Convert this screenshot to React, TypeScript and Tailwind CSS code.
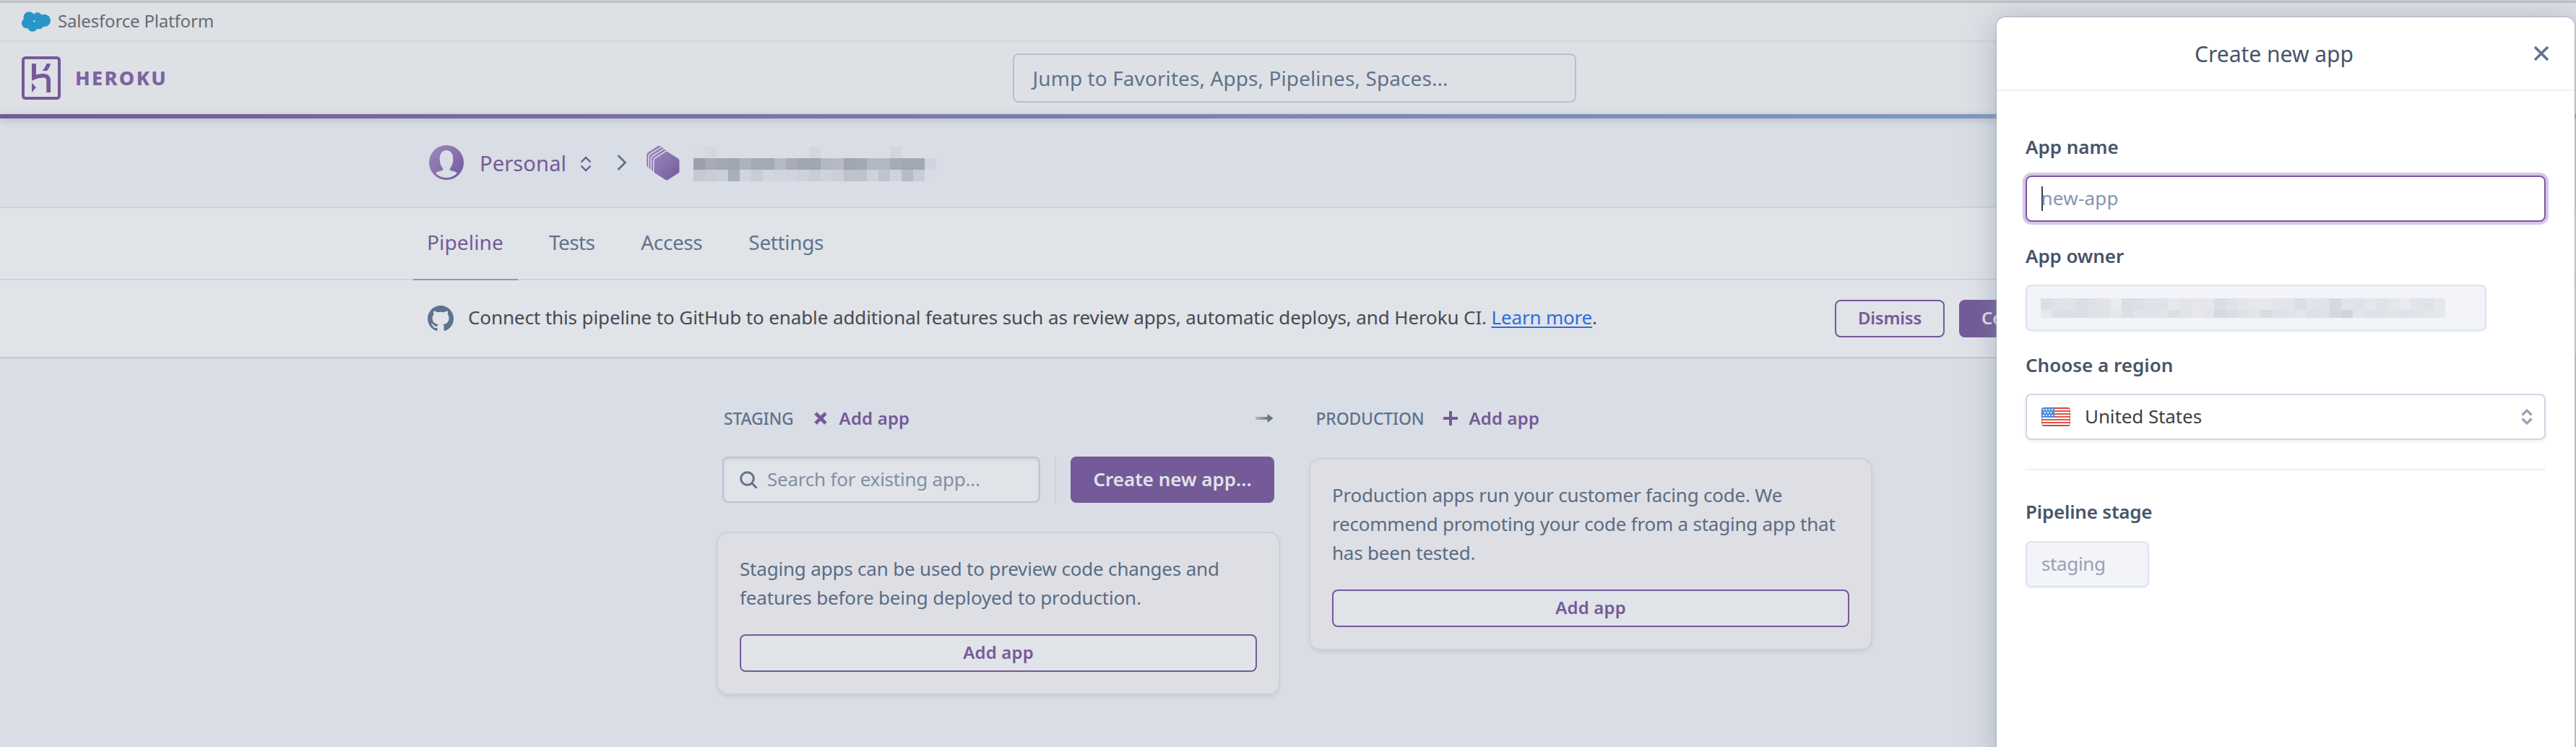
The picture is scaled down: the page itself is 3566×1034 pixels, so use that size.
import type { ReactNode } from "react";

const PURPLE = "#745a98";
const SLATE = "#5f738c";

function SalesforceCloud() {
  return (
    <svg width="40" height="28" viewBox="0 0 40 28" fill="#2b94c8">
      <circle cx="10.3" cy="8" r="7.8" />
      <circle cx="21.8" cy="7.6" r="6.4" />
      <circle cx="31.2" cy="12.4" r="8.7" />
      <circle cx="7" cy="16.3" r="7" />
      <circle cx="15" cy="20.8" r="7" />
      <circle cx="24" cy="17.8" r="6.5" />
    </svg>
  );
}

function HerokuLogo() {
  return (
    <svg width="54" height="60" viewBox="0 0 54 60" fill={PURPLE}>
      <rect x="2" y="2" width="50" height="56" rx="3.5" fill="none" stroke={PURPLE} strokeWidth="4" />
      <path d="M14 10h6v15.6c2.8-.8 6.400-1.500 10-1.500 6.700 0 10 4 10 8.900v17h-5.700V33.200c0-1.800-1-3.600-4.600-3.600-6.400 0-13.600 3.300-15.700 4.300z" />
      <path d="M14 36.500l6 6.500-6 7z" />
      <path d="M34.500 10H40c-.6 3.600-2.400 7-5 10h-6.500c3-3.300 5-6.500 6-10z" />
    </svg>
  );
}

function Avatar() {
  return (
    <svg width="48" height="48" viewBox="0 0 48 48">
      <defs>
        <linearGradient id="avatar" x1="0" y1="0" x2="1" y2="1">
          <stop offset="0" stopColor="#9d8ac0" />
          <stop offset="1" stopColor="#71589a" />
        </linearGradient>
      </defs>
      <circle cx="24" cy="24" r="24" fill="url(#avatar)" />
      <path
        fill="#d9dde5"
        d="M24 7c6 0 9.300 5 9.300 12 0 5.500-1.800 10-4.300 13-.9 1.600-.4 2.700 1.500 3.200 3.500.9 6.500 1.500 8.300 3C35.500 42.500 30 45 24 45s-11.500-2.500-14.800-6.800c1.800-1.500 4.800-2.100 8.300-3 1.900-.5 2.400-1.600 1.500-3.200-2.500-3-4.300-7.500-4.300-13C14.700 12 18 7 24 7z"
      />
    </svg>
  );
}

const HEX = "M26.500 9.200c.9-.6 1.900-.6 2.800 0l14.200 9.100c1.200.8 1.900 2 1.900 3.400v14c0 1.400-.7 2.600-1.900 3.400l-14.200 9c-.9.600-1.900.6-2.800 0l-14.200-9c-1.200-.8-1.900-2-1.900-3.400v-14c0-1.400.7-2.600 1.900-3.400z";

function PipelineHex() {
  return (
    <svg width="47" height="48" viewBox="0 0 47 48">
      <defs>
        <linearGradient id="hex" x1="0" y1="0" x2="1" y2="1">
          <stop offset="0" stopColor="#9d86bd" />
          <stop offset="1" stopColor="#71589a" />
        </linearGradient>
      </defs>
      {[3, 2, 1, 0].map((i) => (
        <g key={i} transform={`translate(${-i * 3.4} ${-i * 2.8 - 1}) `}>
          <path d={HEX} fill="#d9dde5" stroke="#d9dde5" strokeWidth="3" />
          <path d={HEX} fill="url(#hex)" />
        </g>
      ))}
      <path d="M31 0h16v16.500L31.500 7z" fill="#d9dde5" />
    </svg>
  );
}

function UpDown({ color, w = 16, sw = 2.4 }: { color: string; w?: number; sw?: number }) {
  return (
    <svg width={w} height="22" viewBox="0 0 16 22" fill="none" stroke={color} strokeWidth={sw}>
      <path d="M1.500 8.500L8 2l6.500 6.500M1.500 13.500L8 20l6.500-6.500" />
    </svg>
  );
}

function GithubMark() {
  return (
    <svg width="36" height="36" viewBox="0 0 16 16" fill={SLATE}>
      <path d="M8 0C3.580 0 0 3.580 0 8c0 3.540 2.290 6.530 5.470 7.590.4.070.55-.17.55-.38 0-.19-.01-.82-.01-1.490-2.010.37-2.530-.49-2.690-.94-.09-.23-.48-.94-.82-1.130-.28-.15-.68-.52-.01-.53.63-.01 1.080.58 1.230.82.72 1.210 1.870.87 2.330.66.070-.52.28-.87.510-1.070-1.780-.2-3.640-.89-3.640-3.950 0-.87.310-1.590.82-2.150-.08-.2-.36-1.020.08-2.120 0 0 .67-.21 2.200.82.640-.18 1.320-.27 2-.27s1.360.09 2 .27c1.530-1.040 2.200-.82 2.200-.82.440 1.100.16 1.920.08 2.120.510.56.82 1.270.82 2.150 0 3.070-1.870 3.750-3.650 3.950.29.25.540.73.540 1.480 0 1.070-.01 1.930-.01 2.200 0 .21.15.46.550.38A8.010 8.010 0 0016 8c0-4.420-3.580-8-8-8z" />
    </svg>
  );
}

function Flag() {
  return (
    <svg width="40" height="26" viewBox="0 0 40 26">
      <defs>
        <clipPath id="flagClip">
          <rect width="40" height="26" rx="3.500" />
        </clipPath>
        <linearGradient id="flagBlue" x1="0" y1="0" x2="1" y2="1">
          <stop offset="0" stopColor="#5ba3ea" />
          <stop offset="1" stopColor="#3b82de" />
        </linearGradient>
      </defs>
      <g clipPath="url(#flagClip)">
        <rect width="40" height="26" fill="#fff" />
        {[0, 1, 2, 3, 4, 5, 6].map((i) => (
          <rect key={i} y={i * 4} width="40" height="2" fill="#e25346" />
        ))}
        <rect width="18" height="14" fill="url(#flagBlue)" />
        {[2, 6, 10, 14].map((x) => (
          <g key={x} fill="#e3effc">
            <rect x={x} y="2" width="2" height="2" />
            <rect x={x} y="10" width="2" height="2" />
            {x < 14 && <rect x={x + 2} y="6" width="2" height="2" />}
          </g>
        ))}
        <rect x=".5" y=".5" width="39" height="25" rx="3.500" fill="none" stroke="#8d2f2a" strokeOpacity=".5" />
      </g>
    </svg>
  );
}

function Mosaic({ rows, heights }: { rows: string[][]; heights: number[] }) {
  return (
    <div>
      {rows.map((row, r) => (
        <div key={r} className="flex" style={{ height: heights[r] }}>
          {row.map((c, i) => (
            <div key={i} className="w-4" style={{ backgroundColor: c }} />
          ))}
        </div>
      ))}
    </div>
  );
}

const N = "transparent";
const NAME_ROWS = [
  ["#d7dbe2", "#d3d7e0", N, N, N, N, N, N, N, N, "#d2d6df", N, N, N, N, N, N, "#d2d6df", N, N, N],
  ["#9a9fab", "#a6abb6", "#a2a8b3", "#a1a7b2", "#adb3bd", "#a3a9b5", "#a3a9b5", "#b6bac5", "#a8adb8", "#a0a6b2", "#a0a6b2", "#b2b8c2", "#b6bbc6", "#a0a6b1", "#a2a8b3", "#b1b8c1", "#b1b8c2", "#a4aab6", "#a2a8b3", "#a2a8b3", "#d0d4de"],
  ["#c5cad3", "#c8ccd5", "#cbcfd9", "#a9afba", "#d0d4de", "#c8ccd5", "#d2d6df", "#d0d4de", "#d0d4de", "#cdd1da", "#c7ccd5", "#cfd3dc", "#cbcfd8", "#bdc2cb", "#bdc2cb", "#cdd1dc", "#c0c4ce", "#cfd3dd", "#b6bbc6", "#c9cdd8", "#d7dbe3"],
];
const OWNER_ROWS = [
  ["#dcdfe6", "#dfe2ea", "#e1e3e7", "#dcdee6", "#dfe1e9", "#e1e3e7", "#e8eaee", "#dcdee6", "#dcdfe7", "#dfe2ea", "#dfe2ea", "#e6e8ed", "#e2e4e8", "#e5e7eb", "#e5e7eb", "#d9dde5", "#dee1e9", "#e3e5e9", "#e6e8ec", "#e6e8ec", "#e3e5e9", "#e3e5e9", "#dbdee6", "#e1e4ec", "#e0e3eb", "#d5dae2", "#e1e4ed", "#dfe2e9", "#e4e6ea", "#dfe2e9", "#e4e6ea", "#e8eaee", "#e3e5ea", "#dfe2e9", "#e5e7eb"],
  ["#e6e8ec", "#dddfe8", "#dddfe8", "#dcdee3", "#dee1e8", "#dfe1e6", "#e6e7eb", "#dbdee6", "#e2e4e8", "#e1e3e7", "#e3e5e9", "#dbdde3", "#e1e3eb", "#e6e8ed", "#e3e5e9", "#d5dae2", "#d9dde6", "#dfe2e5", "#e3e5e9", "#d9dde3", "#dee1e7", "#dfe2ea", "#e3e5ea", "#dde0e8", "#dee1e8", "#d4d9e1", "#cfd3dc", "#e3e5e9", "#dfe2ea", "#dfe2ea", "#e1e4e9", "#dfe2ea", "#e0e3e8", "#e3e5e9", "#e6e8ec"],
];

function OutlineButton({ children, className }: { children: ReactNode; className: string }) {
  return (
    <button
      className={`flex h-[52px] items-center justify-center rounded-lg border-2 border-[#745a98] bg-[#e0e3e8] pb-[2px] text-2xl font-semibold text-[#745a98] ${className}`}
    >
      {children}
    </button>
  );
}

function StageCard({ lines, className }: { lines: { text: string; track: string }[]; className: string }) {
  return (
    <div
      className={`rounded-2xl border-2 border-[#cbd1db] bg-[#dedfe5] pt-[29px] pr-[30px] pb-[30px] pl-[30px] shadow-[0_3px_5px_rgba(95,115,140,0.13)] ${className}`}
    >
      <div className="text-[26px] leading-10 whitespace-nowrap text-[#5a6c84]">
        {lines.map((l) => (
          <div key={l.text} className={l.track}>
            {l.text}
          </div>
        ))}
      </div>
      <OutlineButton className="mt-[31px] w-full tracking-[0.17px]">Add app</OutlineButton>
    </div>
  );
}

function Label({ children, className }: { children: ReactNode; className: string }) {
  return <div className={`text-[26px] leading-9 font-semibold text-[#475569] ${className}`}>{children}</div>;
}

function CreateAppPanel() {
  return (
    <aside className="absolute top-6 left-[2764px] h-[1040px] w-[800px] rounded-t-xl bg-white shadow-[0_0_0_1.5px_rgba(150,165,185,0.4),0_4px_44px_rgba(125,140,155,0.5)]">
      <div className="flex h-[102px] items-center border-b-2 border-[#eff0f6] pr-[35px] pl-[25px]">
        <h2 className="flex-1 text-center text-[30px] text-[#475569]">Create new app</h2>
        <svg width="22" height="22" viewBox="0 0 22 22" stroke="#5f738c" strokeWidth="3.600" fill="none">
          <path d="M2 2l18 18M20 2L2 20" />
        </svg>
      </div>
      <div className="px-10 pt-[59px] whitespace-nowrap">
        <Label className="">App name</Label>
        <div className="mt-[22px] flex h-16 items-center rounded-lg border-2 border-[#79589f] pl-5 text-[26px] tracking-[0.25px] text-[#8595ad] ring-4 ring-[#d8c6eb]">
          <span className="h-[34px] w-0.5 bg-[#3c3e44]" />
          <span className="-ml-[2.5px] pb-0.5">new-app</span>
        </div>
        <Label className="mt-[29px] tracking-[-0.09px]">App owner</Label>
        <div className="mt-[22px] flex h-16 w-[638px] items-center rounded-lg border-2 border-[#dce3ee] bg-[#f3f4f9] pl-[19px] shadow-[0_2px_3px_rgba(95,115,140,0.08)]">
          <Mosaic rows={OWNER_ROWS} heights={[16, 11]} />
        </div>
        <Label className="mt-[29px]">Choose a region</Label>
        <div className="mt-[22px] flex h-16 items-center rounded-lg border-2 border-[#cfd7e6] pr-4 pl-5 shadow-[0_2px_4px_rgba(95,115,140,0.12)]">
          <Flag />
          <span className="flex-1 pb-0.5 pl-5 text-[26px] tracking-[-0.1px] text-[#3f4147]">United States</span>
          <UpDown color="#94a4bb" sw={3.2} />
        </div>
        <div className="mt-10 h-0.5 bg-[#eff0f6]" />
        <Label className="mt-[39px] tracking-[-0.2px]">Pipeline stage</Label>
        <div className="mt-[23px] flex h-16 w-[171px] items-center rounded-lg border-2 border-[#dde2ee] bg-[#f3f4f9] pb-0.5 pl-5 text-[26px] tracking-[-0.36px] text-[#96a2b5] shadow-[0_2px_3px_rgba(95,115,140,0.08)]">
          staging
        </div>
      </div>
    </aside>
  );
}

const TABS = [
  { label: "Tests", cls: "tracking-[-0.6px] ml-[43px]" },
  { label: "Access", cls: "tracking-[-0.4px] ml-[64px]" },
  { label: "Settings", cls: "tracking-[-0.34px] ml-[64px]" },
];

export default function App() {
  return (
    <div
      className="relative flex h-[1034px] w-[3566px] flex-col overflow-hidden bg-[#d9dde5]"
      style={{ fontFamily: '"Noto Sans", sans-serif' }}
    >
      <div className="h-1 shrink-0 border-b-2 border-[#bcbec1] bg-[#cbcbcc]" />

      <div className="flex h-[54px] shrink-0 items-center border-b-2 border-[#cfd5de] bg-[#dde0e5] pl-[30px]">
        <SalesforceCloud />
        <span className="pb-[3px] pl-[10px] text-2xl tracking-[-0.18px] text-[#686b71]">Salesforce Platform</span>
      </div>

      <header className="flex h-[100px] shrink-0 items-center bg-[#dde0e5] pl-[30px]">
        <HerokuLogo />
        <span className="w-[1318px] pl-5 text-[27px] font-extrabold tracking-[2.4px] text-[#7e62a2]">HEROKU</span>
        <div className="flex h-[68px] w-[780px] items-center rounded-lg border-2 border-[#b5c1d4] pb-px pl-[25.5px] text-[28px] tracking-[0.09px] text-[#5f738c]">
          Jump to Favorites, Apps, Pipelines, Spaces...
        </div>
      </header>
      <div className="relative h-1.5 shrink-0 bg-linear-to-r from-[#745a98] via-[#7c86b4] to-[#7ea9cc] shadow-[0_2px_10px_rgba(70,80,95,0.28)]" />

      <div className="flex h-[124px] shrink-0 items-center border-b-2 border-[#cbd2de] pl-[594px]">
        <Avatar />
        <span className="pt-px pl-[22px] text-[29px] tracking-[0.15px] text-[#745a98]">Personal</span>
        <div className="ml-[19px] pt-1">
          <UpDown color={PURPLE} />
        </div>
        <svg className="ml-[35px]" width="14" height="24" viewBox="0 0 14 24" fill="none" stroke={SLATE} strokeWidth="2.800">
          <path d="M1.500 2l10 10-10 10" />
        </svg>
        <div className="ml-[27px] pt-0.5">
          <PipelineHex />
        </div>
        <div className="ml-[18px] pt-1">
          <Mosaic rows={NAME_ROWS} heights={[16, 16, 16]} />
        </div>
      </div>

      <nav className="flex h-[100px] shrink-0 border-b-2 border-[#cbd2de] bg-[#e0e3e8] pl-[572px] text-[28px] text-[#5f738c]">
        <div className="-mb-0.5 flex w-[145px] items-center border-b-2 border-[#9a90b6] pb-1 pl-[19px] tracking-[0.15px] text-[#745a98]">
          Pipeline
        </div>
        {TABS.map((t) => (
          <div key={t.label} className={`flex items-center pb-1 ${t.cls}`}>
            {t.label}
          </div>
        ))}
      </nav>

      <div className="flex h-[108px] shrink-0 items-center border-b-2 border-[#c3c7cc] bg-[#e0e3e8] pr-[590px] pl-[592px] whitespace-nowrap">
        <GithubMark />
        <p className="flex-1 pb-[3px] pl-5 text-[26px] tracking-[-0.11px] text-[#474a51]">
          Connect this pipeline to GitHub to enable additional features such as review apps, automatic deploys, and Heroku
          CI.{" "}
          <a className="tracking-[-0.19px] text-[#2f6bdc] underline decoration-2 underline-offset-[3px]">Learn more</a>.
        </p>
        <OutlineButton className="w-[152px] tracking-[-0.23px]">Dismiss</OutlineButton>
        <button className="ml-5 h-[52px] w-[264px] rounded-lg bg-[#745a98] pb-[2px] pl-[31px] text-left text-2xl font-semibold text-[#dfe0e9]">
          Connect to GitHub
        </button>
      </div>

      <main className="flex gap-10 pt-[67px] pl-[992px] whitespace-nowrap">
        <section className="w-[780px]">
          <div className="flex h-8 items-center pr-[9px] pl-[10px]">
            <span className="pt-px text-[23px] font-medium tracking-[-0.2px] text-[#5f738c]">STAGING</span>
            <svg className="ml-[27px]" width="20" height="20" viewBox="0 0 20 20" stroke={PURPLE} strokeWidth="4.600">
              <path d="M3 3l14 14M17 3L3 17" />
            </svg>
            <span className="flex-1 pl-[16px] text-2xl font-semibold tracking-[0.17px] text-[#745a98]">Add app</span>
            <svg width="25" height="14" viewBox="0 0 25 14">
              <defs>
                <linearGradient id="arrow" x1="0" x2="1">
                  <stop offset="0" stopColor="#b4b9c0" />
                  <stop offset=".75" stopColor="#687580" />
                </linearGradient>
              </defs>
              <path d="M0 5h16.500V1l8 6-8 6V9H0z" fill="url(#arrow)" />
            </svg>
          </div>
          <div className="mt-[37px] flex h-16 pr-2 pl-2">
            <div className="flex w-[440px] items-center rounded-lg border-2 border-[#b8c2d5] bg-[#e0e3e8] pl-[22px] shadow-[inset_0_2px_4px_rgba(95,115,140,0.15)]">
              <svg width="25" height="25" viewBox="0 0 25 25" fill="none" stroke={SLATE} strokeWidth="3">
                <circle cx="10.500" cy="10.500" r="8.800" />
                <path d="M16.500 16.500l7 7" />
              </svg>
              <span className="pb-0.5 pl-[13px] text-[26px] tracking-[-0.23px] text-[#8190a5]">Search for existing app...</span>
            </div>
            <div className="ml-5 w-0.5 bg-[#cdd3dd]" />
            <button className="ml-5 w-[282px] rounded-lg bg-[#745a98] pb-0.5 text-[26px] font-semibold text-[#e0e3e8]">
              Create new app...
            </button>
          </div>
          <StageCard
            className="mt-10"
            lines={[
              { text: "Staging apps can be used to preview code changes and", track: "tracking-[-0.19px]" },
              { text: "features before being deployed to production.", track: "tracking-[-0.168px]" },
            ]}
          />
        </section>

        <section className="w-[780px]">
          <div className="flex h-8 items-center pl-[9.500px]">
            <span className="pt-px text-[23px] font-medium tracking-[-0.2px] text-[#5f738c]">PRODUCTION</span>
            <svg className="ml-[27px]" width="20" height="20" viewBox="0 0 20 20" stroke={PURPLE} strokeWidth="4">
              <path d="M10 0v20M0 10h20" />
            </svg>
            <span className="pl-[15px] text-2xl font-semibold tracking-[0.17px] text-[#745a98]">Add app</span>
          </div>
          <StageCard
            className="mt-[39px]"
            lines={[
              { text: "Production apps run your customer facing code. We", track: "tracking-[-0.22px]" },
              { text: "recommend promoting your code from a staging app that", track: "tracking-[-0.22px]" },
              { text: "has been tested.", track: "tracking-[-0.2px]" },
            ]}
          />
        </section>
      </main>

      <CreateAppPanel />
    </div>
  );
}
